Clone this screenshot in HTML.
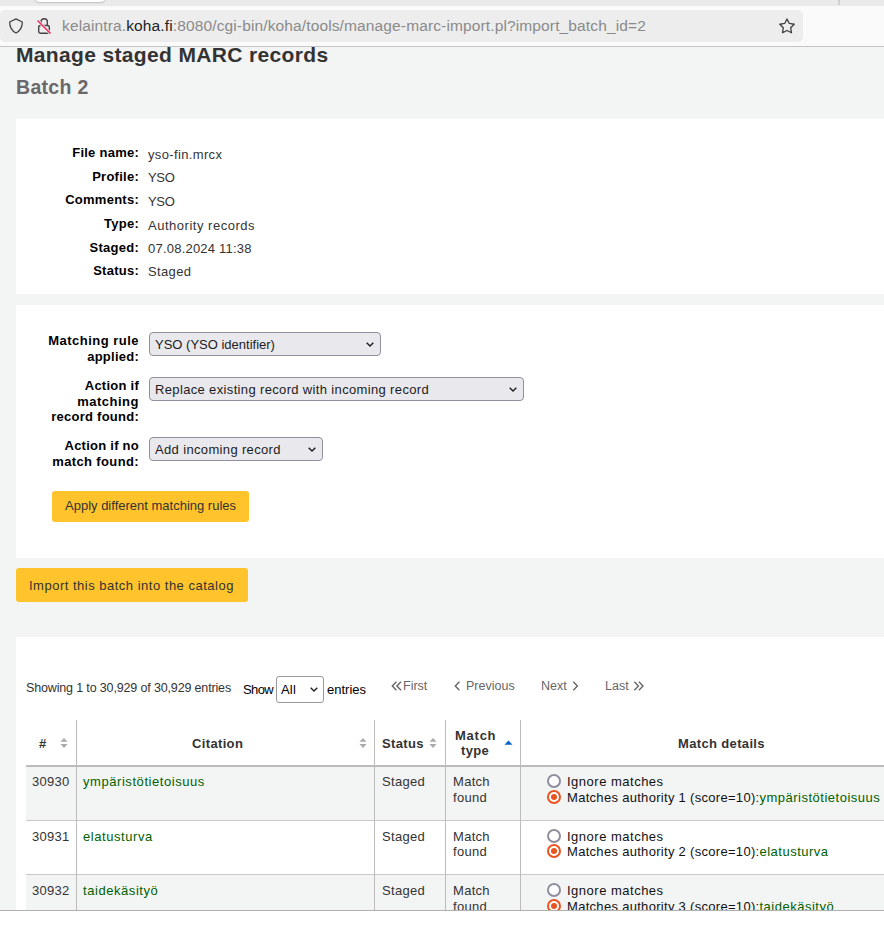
<!DOCTYPE html>
<html><head><meta charset="utf-8">
<style>
*{box-sizing:border-box;margin:0;padding:0}
html,body{width:884px;height:932px;overflow:hidden}
body{position:relative;background:#f3f4f4;font-family:"Liberation Sans",sans-serif;font-size:13px;color:#333}
.a{position:absolute;white-space:nowrap}
#chrome{position:absolute;left:0;top:0;width:884px;height:47px;background:#fafafa;border-bottom:1px solid #c4c4c4}
#tabs{position:absolute;left:0;top:0;width:884px;height:6px;background:#eaeaea}
#tab{position:absolute;left:35px;top:-6px;width:70px;height:8px;background:#fff;border-radius:0 0 4px 4px;box-shadow:0 .5px 1.5px rgba(0,0,0,.3)}
#tabsep{position:absolute;left:837.5px;top:0;width:2px;height:5px;background:#d2d2d2}
#url{position:absolute;left:0;top:10px;width:803px;height:32px;background:#ededed;border-radius:5px}
.urltxt{font-size:15.5px;letter-spacing:.13px;color:#8a8a8a;top:16px;left:62px;line-height:19px}
.urltxt b{font-weight:normal;color:#222}
.panel{position:absolute;left:16px;width:880px;background:#fff}
.lbl{font-weight:bold;color:#000;text-align:right;letter-spacing:.25px}
.val{letter-spacing:.35px;color:#333}
.sel{position:absolute;background:#e9e9ed;border:1px solid #8f8f9d;border-radius:4px;color:#1c1b22;letter-spacing:.35px}
.sel span{position:absolute;left:5px;top:3.6px;line-height:16px}
.chev{position:absolute;width:8px;height:5px}
.btn{position:absolute;background:#ffc32b;border-radius:3px;color:#333;letter-spacing:.35px}
.btn span{position:absolute;line-height:16px}

.pg{top:678px;font-size:12.5px;line-height:16px;color:#666;letter-spacing:0}
.vl{top:720px;width:1px;height:190px;background:#bcbcbc}
.th{font-weight:bold;color:#333;line-height:16px;letter-spacing:.35px}
.td{line-height:16px;color:#333;letter-spacing:.3px}
.radio{width:14px;height:14px;border:2px solid #8f8f9d;border-radius:50%;background:#fff}
.radio.on{border-color:#e95420}
.radio.on::after{content:"";position:absolute;left:2px;top:2px;width:6px;height:6px;border-radius:50%;background:#e95420}

.green,.td.green{color:#006100}
.td .green{letter-spacing:.5px}
</style></head>
<body>
<div id="chrome">
  <div id="tabs"><div id="tab"></div><div id="tabsep"></div></div>
  <div id="url"></div>
  <svg class="a" style="left:0;top:0" width="60" height="46" viewBox="0 0 60 46">
<path d="M16 18.9 L22.3 22 C22.4 27.5 20.5 30.6 16 33 C11.5 30.6 9.6 27.5 9.7 22 Z" fill="none" stroke="#444" stroke-width="1.3" stroke-linejoin="round"/>
<rect x="38.7" y="25.5" width="10.6" height="7.7" rx="1.6" fill="none" stroke="#444" stroke-width="1.4"/>
<path d="M41.1 24 L41.1 21.6 C41.1 19.6 42.3 18.7 44.2 18.7 C46.1 18.7 47.3 19.6 47.3 21.6 L47.3 25.5" fill="none" stroke="#444" stroke-width="1.4"/>
<path d="M37.5 20.5 L50.5 33.5" stroke="#ededed" stroke-width="3"/>
<path d="M37.5 20.5 L50.5 33.5" stroke="#f0245a" stroke-width="1.4"/>
</svg>
<svg class="a" style="left:770px;top:12px" width="26" height="26" viewBox="770 12 26 26"><path d="M787.00 19.00 L789.29 23.44 L794.23 24.25 L790.71 27.81 L791.47 32.75 L787.00 30.50 L782.53 32.75 L783.29 27.81 L779.77 24.25 L784.71 23.44 Z" fill="none" stroke="#444" stroke-width="1.35" stroke-linejoin="round"/></svg>
  <div class="a urltxt">kelaintra.<b>koha.fi</b>:8080/cgi-bin/koha/tools/manage-marc-import.pl?import_batch_id=2</div>
</div>

<div class="a" style="left:16px;top:42px;font-size:21px;font-weight:bold;color:#333;line-height:25px;letter-spacing:.35px">Manage staged MARC records</div>
<div class="a" style="left:16px;top:76px;font-size:19.5px;font-weight:bold;color:#696969;line-height:22px;letter-spacing:.3px">Batch 2</div>

<div class="panel" style="top:119px;height:175px"></div>
<div class="a lbl" style="right:745px;top:145px;line-height:16px">File name:</div>
<div class="a val" style="left:148px;top:147px;line-height:16px">yso-fin.mrcx</div>
<div class="a lbl" style="right:745px;top:169px;line-height:16px">Profile:</div>
<div class="a val" style="left:148px;top:170px;line-height:16px;letter-spacing:-.3px">YSO</div>
<div class="a lbl" style="right:745px;top:192px;line-height:16px">Comments:</div>
<div class="a val" style="left:148px;top:194px;line-height:16px;letter-spacing:-.3px">YSO</div>
<div class="a lbl" style="right:745px;top:216px;line-height:16px">Type:</div>
<div class="a val" style="left:148px;top:218px;line-height:16px;letter-spacing:.52px">Authority records</div>
<div class="a lbl" style="right:745px;top:240px;line-height:16px">Staged:</div>
<div class="a val" style="left:148px;top:241px;line-height:16px;letter-spacing:.22px">07.08.2024 11:38</div>
<div class="a lbl" style="right:745px;top:263px;line-height:16px">Status:</div>
<div class="a val" style="left:148px;top:264px;line-height:16px">Staged</div>
<div class="panel" style="top:305px;height:253px"></div>
<div class="a lbl" style="right:745px;top:333px;line-height:15.5px"><span style="letter-spacing:.48px">Matching rule</span><br>applied:</div>
<div class="sel" style="left:149px;top:332px;width:232px;height:24px"><span style="letter-spacing:0">YSO (YSO identifier)</span><svg class="chev" style="right:6px;top:9px" viewBox="0 0 8 5"><path d="M0.7 0.7 L4 4 L7.3 0.7" fill="none" stroke="#1c1b22" stroke-width="1.4"/></svg></div>
<div class="a lbl" style="right:745px;top:378px;line-height:15.5px">Action if<br><span style="letter-spacing:.5px">matching</span><br>record found:</div>
<div class="sel" style="left:149px;top:377px;width:375px;height:24px"><span>Replace existing record with incoming record</span><svg class="chev" style="right:6px;top:9px" viewBox="0 0 8 5"><path d="M0.7 0.7 L4 4 L7.3 0.7" fill="none" stroke="#1c1b22" stroke-width="1.4"/></svg></div>
<div class="a lbl" style="right:745px;top:438px;line-height:15.5px">Action if no<br><span style="letter-spacing:.37px">match found:</span></div>
<div class="sel" style="left:149px;top:437px;width:174px;height:24px"><span>Add incoming record</span><svg class="chev" style="right:6px;top:9px" viewBox="0 0 8 5"><path d="M0.7 0.7 L4 4 L7.3 0.7" fill="none" stroke="#1c1b22" stroke-width="1.4"/></svg></div>
<div class="btn" style="left:52px;top:491px;width:197px;height:31px"><span style="left:13px;top:7px;letter-spacing:0">Apply different matching rules</span></div>
<div class="btn" style="left:16px;top:568px;width:232px;height:34px"><span style="left:13px;top:10px;letter-spacing:.5px">Import this batch into the catalog</span></div>
<div class="panel" style="top:637px;height:273px"></div>
<div class="a" style="left:26px;top:680px;font-size:12.5px;line-height:16px;letter-spacing:-.15px;color:#333">Showing 1 to 30,929 of 30,929 entries</div>
<div class="a" style="left:243px;top:682px;line-height:16px;letter-spacing:-.6px;color:#000">Show</div>
<div class="a" style="left:276px;top:676px;width:48px;height:27px;background:#fff;border:1px solid #999;border-radius:3px"></div>
<div class="a" style="left:281px;top:682px;line-height:16px;color:#000;letter-spacing:.2px">All</div>
<svg class="a" style="left:310px;top:687px" width="8" height="5" viewBox="0 0 8 5"><path d="M0.7 0.7 L4 4 L7.3 0.7" fill="none" stroke="#222" stroke-width="1.4"/></svg>
<div class="a" style="left:327px;top:682px;line-height:16px;color:#000;letter-spacing:0">entries</div>
<svg class="a" style="left:390.5px;top:680.5px" width="11" height="10" viewBox="0 0 11 10"><path d="M5.4 0.8 L1.3 5 L5.4 9.2 M10 0.8 L5.9 5 L10 9.2" fill="none" stroke="#666" stroke-width="1.4"/></svg>
<div class="a pg" style="left:403px">First</div>
<svg class="a" style="left:453.5px;top:680.5px" width="7" height="10" viewBox="0 0 7 10"><path d="M5.4 0.8 L1.3 5 L5.4 9.2" fill="none" stroke="#666" stroke-width="1.4"/></svg>
<div class="a pg" style="left:466px">Previous</div>
<div class="a pg" style="left:541px">Next</div>
<svg class="a" style="left:571.5px;top:680.5px" width="7" height="10" viewBox="0 0 7 10"><path d="M1.3 0.8 L5.4 5 L1.3 9.2" fill="none" stroke="#666" stroke-width="1.4"/></svg>
<div class="a pg" style="left:605px">Last</div>
<svg class="a" style="left:633px;top:680.5px" width="11" height="10" viewBox="0 0 11 10"><path d="M1.3 0.8 L5.4 5 L1.3 9.2 M5.9 0.8 L10 5 L5.9 9.2" fill="none" stroke="#666" stroke-width="1.4"/></svg>

<div class="a" style="left:26px;top:765px;width:858px;height:2px;background:#bcbcbc"></div>
<div class="a" style="left:26px;top:767px;width:858px;height:53px;background:#f3f4f4"></div>
<div class="a" style="left:26px;top:820px;width:858px;height:1px;background:#c8c8c8"></div>
<div class="a" style="left:26px;top:874px;width:858px;height:1px;background:#c8c8c8"></div>
<div class="a" style="left:26px;top:875px;width:858px;height:35px;background:#f3f4f4"></div>
<div class="a vl" style="left:76px"></div>
<div class="a vl" style="left:374px"></div>
<div class="a vl" style="left:445px"></div>
<div class="a vl" style="left:520px"></div>
<div class="a th" style="left:39px;top:736px">#</div>
<svg class="a" style="left:60px;top:737px" width="8" height="12" viewBox="0 0 8 12"><path d="M0.4 4.8 L7.6 4.8 L4 0.9 Z M0.4 7.1 L7.6 7.1 L4 11 Z" fill="#aaa"/></svg>
<div class="a th" style="left:192px;top:736px">Citation</div>
<svg class="a" style="left:359px;top:737px" width="8" height="12" viewBox="0 0 8 12"><path d="M0.4 4.8 L7.6 4.8 L4 0.9 Z M0.4 7.1 L7.6 7.1 L4 11 Z" fill="#aaa"/></svg>
<div class="a th" style="left:382px;top:736px">Status</div>
<svg class="a" style="left:429px;top:737px" width="8" height="12" viewBox="0 0 8 12"><path d="M0.4 4.8 L7.6 4.8 L4 0.9 Z M0.4 7.1 L7.6 7.1 L4 11 Z" fill="#aaa"/></svg>
<div class="a th" style="left:455px;top:727.5px;line-height:15.5px;letter-spacing:.75px">Match</div><div class="a th" style="left:461px;top:742.5px;line-height:15.5px;letter-spacing:.35px">type</div>
<svg class="a" style="left:504px;top:740px" width="9" height="5" viewBox="0 0 9 5"><path d="M0.5 4.8 L8.5 4.8 L4.5 0.5 Z" fill="#0b63ce"/></svg>
<div class="a th" style="left:678px;top:736px">Match details</div>
<div class="a td" style="left:32px;top:774px">30930</div>
<div class="a td green" style="letter-spacing:.56px;left:83px;top:774px">ympäristötietoisuus</div>
<div class="a td" style="left:382px;top:774px">Staged</div>
<div class="a td" style="left:453px;top:774px;line-height:15.5px">Match<br>found</div>
<div class="a radio" style="left:547px;top:774px"></div>
<div class="a radio on" style="left:547px;top:790px"></div>
<div class="a td" style="left:567px;top:774px;line-height:16px;color:#111"><span style="letter-spacing:.5px">Ignore matches</span><br>Matches authority 1 (score=10):<span class="green">ympäristötietoisuus</span></div>
<div class="a td" style="left:32px;top:829px">30931</div>
<div class="a td green" style="letter-spacing:.56px;left:83px;top:829px">elatusturva</div>
<div class="a td" style="left:382px;top:829px">Staged</div>
<div class="a td" style="left:453px;top:829px;line-height:15px">Match<br>found</div>
<div class="a radio" style="left:547px;top:829px"></div>
<div class="a radio on" style="left:547px;top:844px"></div>
<div class="a td" style="left:567px;top:829px;line-height:15px;color:#111"><span style="letter-spacing:.5px">Ignore matches</span><br>Matches authority 2 (score=10):<span class="green">elatusturva</span></div>
<div class="a td" style="left:32px;top:883px">30932</div>
<div class="a td green" style="letter-spacing:.56px;left:83px;top:883px">taidekäsityö</div>
<div class="a td" style="left:382px;top:883px">Staged</div>
<div class="a td" style="left:453px;top:883px;line-height:15.5px">Match<br>found</div>
<div class="a radio" style="left:547px;top:883px"></div>
<div class="a radio on" style="left:547px;top:899px"></div>
<div class="a td" style="left:567px;top:883px;line-height:16px;color:#111"><span style="letter-spacing:.5px">Ignore matches</span><br>Matches authority 3 (score=10):<span class="green">taidekäsityö</span></div>


<div style="position:absolute;left:0;top:910px;width:884px;height:1px;background:#b0b0b0"></div>
<div style="position:absolute;left:0;top:911px;width:884px;height:21px;background:#fff"></div>
</body></html>
